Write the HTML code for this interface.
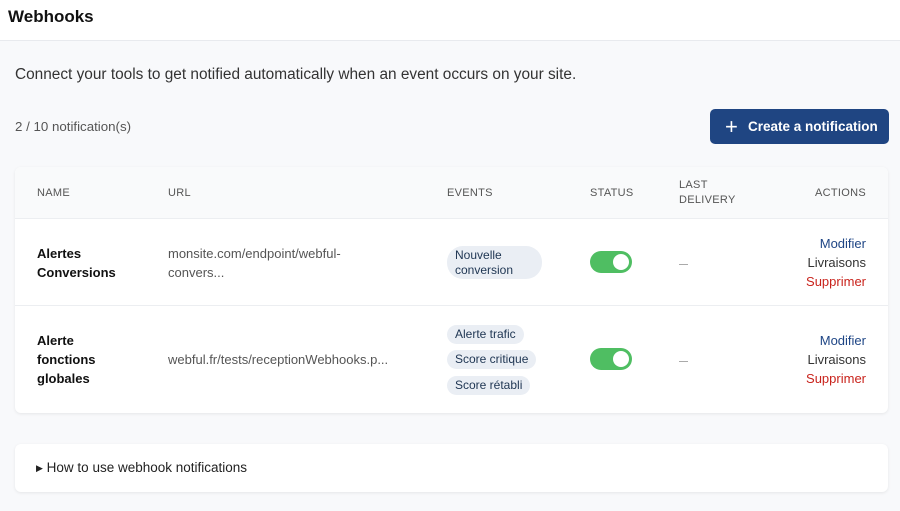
<!DOCTYPE html><html><head><style>
*{box-sizing:border-box;margin:0;padding:0}
body{width:900px;height:511px;overflow:hidden;background:#f8f9fb;font-family:"Liberation Sans",sans-serif;color:#1f2328;position:relative}
.hdr{position:absolute;left:0;top:0;width:900px;height:41px;background:#fff;border-bottom:1px solid #e8eaee}
.hdr h1{position:absolute;left:8px;top:7px;font-size:17px;font-weight:bold;color:#111}
.a{position:absolute;white-space:nowrap}
.card{position:absolute;left:15px;top:167px;width:873px;height:246px;background:#fff;border-radius:6px;box-shadow:0 1px 3px rgba(0,0,0,.08)}
.th{position:absolute;left:0;top:0;width:873px;height:52px;background:#f9fafb;border-bottom:1px solid #eceef1;border-radius:6px 6px 0 0}
.h{font-size:11px;color:#555;letter-spacing:.3px;line-height:15px}
.nm{font-size:13px;font-weight:bold;color:#111;line-height:19px}
.url{font-size:13px;color:#555;line-height:19px}
.pill{position:absolute;background:#eaeef4;border-radius:10px;font-size:12px;color:#1e3552;padding:2px 8px;line-height:15px;white-space:nowrap}
.tg{position:absolute;width:42px;height:22px;background:#4fbe62;border-radius:11px}
.tg:after{content:"";position:absolute;right:3px;top:3px;width:16px;height:16px;border-radius:50%;background:#fff}
.act{position:absolute;right:22px;text-align:right;font-size:13px;line-height:19px}
.act .m{color:#1e4585}.act .l{color:#333}.act .s{color:#c9231c}
.dash{position:absolute;width:9px;height:1px;background:#aaa}
</style></head><body>
<div class="hdr"><h1>Webhooks</h1></div>
<div class="a" style="left:15px;top:66px;font-size:15.4px;color:#333">Connect your tools to get notified automatically when an event occurs on your site.</div>
<div class="a" style="left:15px;top:119px;font-size:13.3px;color:#555">2 / 10 notification(s)</div>
<div class="a" style="left:710px;top:109px;width:179px;height:35px;background:#1f4582;border-radius:5px;color:#fff;font-size:13.5px;font-weight:bold;line-height:35px;padding-left:38px">Create a notification<span style="position:absolute;left:15px;top:0;font-weight:normal;font-size:22px">+</span></div>
<div class="card">
<div class="th"></div>
<div class="a h" style="left:22px;top:19px">NAME</div>
<div class="a h" style="left:153px;top:19px">URL</div>
<div class="a h" style="left:432px;top:19px">EVENTS</div>
<div class="a h" style="left:575px;top:19px">STATUS</div>
<div class="a h" style="left:664px;top:11px">LAST<br>DELIVERY</div>
<div class="a h" style="right:22px;top:19px">ACTIONS</div>
<div class="a" style="left:0;top:138px;width:873px;height:1px;background:#eceef1"></div>
<div class="a nm" style="left:22px;top:77px">Alertes<br>Conversions</div>
<div class="a url" style="left:153px;top:77px">monsite.com/endpoint/webful-<br>convers...</div>
<div class="pill" style="left:432px;top:79px;width:95px;height:33px;border-radius:16px">Nouvelle<br>conversion</div>
<div class="tg" style="left:575px;top:84px"></div>
<div class="dash" style="left:664px;top:97px"></div>
<div class="act" style="top:67px"><div class="m">Modifier</div><div class="l">Livraisons</div><div class="s">Supprimer</div></div>
<div class="a nm" style="left:22px;top:164px">Alerte<br>fonctions<br>globales</div>
<div class="a url" style="left:153px;top:183px">webful.fr/tests/receptionWebhooks.p...</div>
<div class="pill" style="left:432px;top:158px">Alerte trafic</div>
<div class="pill" style="left:432px;top:183px">Score critique</div>
<div class="pill" style="left:432px;top:209px">Score rétabli</div>
<div class="tg" style="left:575px;top:181px"></div>
<div class="dash" style="left:664px;top:194px"></div>
<div class="act" style="top:164px"><div class="m">Modifier</div><div class="l">Livraisons</div><div class="s">Supprimer</div></div>
</div>
<div class="a" style="left:15px;top:444px;width:873px;height:48px;background:#fff;border-radius:6px;box-shadow:0 1px 3px rgba(0,0,0,.08)"></div>
<div class="a" style="left:36px;top:460px;font-size:13.5px;color:#222"><span style="font-size:9px;position:relative;top:-1px">&#9654;</span> How to use webhook notifications</div>
</body></html>
